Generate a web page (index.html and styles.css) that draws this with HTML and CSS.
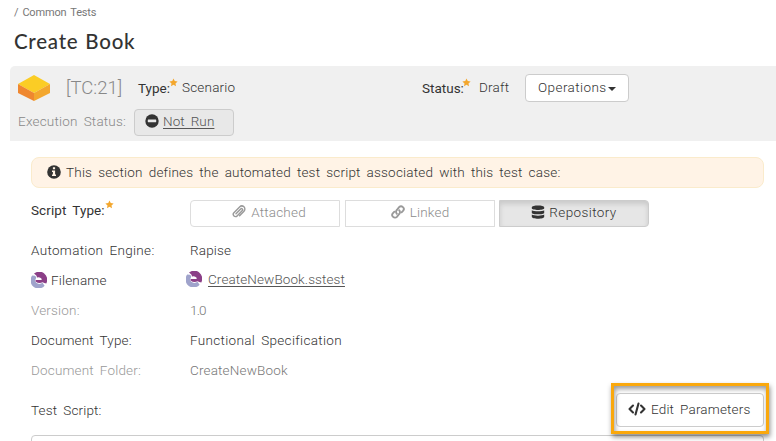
FILE: index.html
```html
<!DOCTYPE html>
<html lang="en">
<head>
<meta charset="utf-8">
<title>Create Book</title>
<link rel="stylesheet" href="styles.css">
</head>
<body>
<svg class="defs" width="0" height="0">
  <symbol id="star" viewBox="0 0 24 24"><path d="M12 1l3.300 7.200 7.700.9-5.700 5.300 1.500 7.800L12 18.300l-6.800 3.900 1.500-7.800L1 9.100l7.700-.9z"/></symbol>
  <symbol id="rapise" viewBox="0 0 16 16">
    <path d="M1.200 3.600A8 8 0 0 0 13.600 13.700L11.500 10.800A4.800 4.800 0 0 1 4 9L5.300 5.200 4 3.800z" fill="#9fa3cb"/>
    <path d="M3 1.600A8 8 0 0 1 15.300 11.400L13.300 11 11.600 10.200Q8 12 4.500 9.400L4.600 7.900 10.600 8V6.800Q9 4.500 6.200 5.400L5.300 3.600z" fill="#8b3f87"/>
  </symbol>
</svg>
<nav class="crumbs"><span>/</span><span>Common Tests</span></nav>
<h1>Create Book</h1>
<header class="summary">
  <div class="line main-line">
    <svg class="box" viewBox="0 0 32 26"><path d="M16 0l16 9-16 9L0 9z" fill="#fbcd25"/><path d="M0 9l16 9v8L0 18z" fill="#ef8730"/><path d="M32 9l-16 9v8l16-8z" fill="#f3a72e"/></svg>
    <span class="token">[TC:21]</span>
    <span class="label type">Type:</span><svg class="star"><use href="#star"/></svg>
    <span class="scenario">Scenario</span>
    <span class="label status">Status:</span><svg class="star"><use href="#star"/></svg>
    <span class="draft">Draft</span>
    <button class="operations"><span>Operations</span><i class="caret"></i></button>
  </div>
  <div class="line exec-line">
    <span class="exec">Execution Status:</span>
    <div class="run"><svg viewBox="0 0 14 14"><circle cx="7" cy="7" r="6.700" fill="#333"/><rect x="2.800" y="5.600" width="8.400" height="2.600" rx=".4" fill="#e8e8e8"/></svg><a>Not Run</a></div>
  </div>
</header>
<main>
  <div class="info"><svg viewBox="0 0 14 14"><circle cx="7" cy="7" r="6.800" fill="#333"/><path d="M5.900 2.300h2.200v2H5.900zM5 5.500h3.100v4.100H9v1.500H5V9.600h.9V7H5z" fill="#fff3e6"/></svg><span>This section defines the automated test script associated with this test case:</span></div>
  <div class="row script-row">
    <div class="name label"><span>Script Type:</span><svg class="star"><use href="#star"/></svg></div>
    <div class="group">
      <button class="off first"><svg viewBox="0 0 14 14"><path d="M4 8.800l4.700-4.900a1.100 1.100 0 0 1 1.600 1.600l-5.200 5.400a2.200 2.200 0 0 1-3.200-3.100l5.700-5.900a3.050 3.050 0 0 1 4.400 4.300L7.600 10.700" fill="none" stroke="currentColor" stroke-width="1.400" stroke-linecap="round"/></svg><span>Attached</span></button>
      <button class="off"><svg viewBox="0 0 14 14"><g fill="none" stroke="currentColor" stroke-width="1.900" stroke-linecap="round"><path d="M5.800 8.700a2.600 2.600 0 0 1 0-3.700l2.300-2.800a2.600 2.600 0 0 1 3.900 3.700l-1.400 1.400"/><path d="M8.200 5.300a2.600 2.600 0 0 1 0 3.700l-2.300 2.800A2.600 2.600 0 0 1 2 8.100l1.400-1.400"/></g></svg><span>Linked</span></button>
      <button class="on"><svg viewBox="0 0 14 14"><g fill="#333"><path d="M.8 2.300C.8-.2 13.200-.2 13.200 2.300v1c0 2.200-12.400 2.200-12.400 0z"/><path d="M.8 5.200c2 1.500 10.400 1.500 12.400 0v2.500c0 2.200-12.400 2.200-12.400 0z"/><path d="M.8 9.600c2 1.500 10.400 1.500 12.400 0v2.200c0 2.600-12.400 2.600-12.400 0z"/></g></svg><span class="repo">Repository</span></button>
    </div>
  </div>
  <div class="row"><div class="name"><span class="wide">Automation Engine:</span></div><div><span>Rapise</span></div></div>
  <div class="row"><div class="name"><svg class="rap"><use href="#rapise"/></svg><span>Filename</span></div><div class="file"><svg class="rap"><use href="#rapise"/></svg><a>CreateNewBook.sstest</a></div></div>
  <div class="row"><div class="name faint"><span>Version:</span></div><div class="muted"><span class="number">1.0</span></div></div>
  <div class="row"><div class="name"><span>Document Type:</span></div><div><span class="wide">Functional Specification</span></div></div>
  <div class="row"><div class="name faint"><span>Document Folder:</span></div><div class="muted"><span>CreateNewBook</span></div></div>
  <div class="test-row">
    <span class="test-label">Test Script:</span>
    <div class="edit-wrap"><button class="edit"><svg viewBox="0 0 18 14"><path d="M5 3.500L1.500 7 5 10.500M13 3.500L16.500 7 13 10.500M10.500 1.500l-3 11" fill="none" stroke="#333" stroke-width="2.100" stroke-linecap="round" stroke-linejoin="round"/></svg><span>Edit Parameters</span></button><div class="highlight"></div></div>
  </div>
  <div class="editor"></div>
</main>
</body>
</html>
```

FILE: styles.css
```css
* { box-sizing: border-box; }
body { margin: 0; width: 776px; height: 441px; overflow: hidden; background: #fff; color: #333; font: 300 13.500px/20px Roboto, sans-serif; letter-spacing: .17px; word-spacing: 2.500px; }
.defs { position: absolute; }
svg { display: block; flex: none; }
span, a { white-space: nowrap; }
button { font: inherit; letter-spacing: inherit; word-spacing: inherit; color: inherit; background: #fff; padding: 0; display: flex; align-items: center; }
a { color: #555; text-decoration: underline; text-underline-offset: 2px; letter-spacing: .1px; }
.crumbs { height: 24px; padding: 3px 0 0 14px; display: flex; gap: 4px; }
.crumbs span { font-size: 11px; font-weight: 400; color: #777; letter-spacing: -.17px; word-spacing: 1.500px; }
h1 { margin: 0; padding-left: 14px; height: 42px; font: 500 20.500px/34px Lato, sans-serif; letter-spacing: .75px; word-spacing: 1px; color: #333; }
.summary { margin-left: 10px; height: 75px; padding: 6px 0 0 8px; background: #f0f0f0; border-radius: 5px 0 0 0; }
.line { display: flex; align-items: center; }
.main-line { height: 32px; }
.box { width: 32px; height: 26px; }
.token { width: 72px; margin-left: 16px; font-size: 18.500px; letter-spacing: 0; color: #888; }
.label { font-weight: 400; color: #333; }
.type { width: 31px; letter-spacing: 0; }
.star { width: 9px; height: 9px; fill: #f3a72e; margin-top: -11px; }
.scenario { width: 240px; margin: -3px 0 0 4px; letter-spacing: .2px; }
.status { width: 40px; letter-spacing: 0; }
.draft { width: 46px; margin: -2px 0 0 8px; letter-spacing: .2px; }
.operations { width: 104px; height: 28px; padding: 0 0 2px 12px; border: 1px solid #ccc; border-radius: 4px; }
.operations span { letter-spacing: .43px; }
.caret { border: 4px solid transparent; border-top-color: #333; border-bottom: 0; margin: 3px 0 0 1px; }
.exec-line { height: 36px; }
.exec { width: 116px; color: #888; margin-top: -2px; letter-spacing: .2px; }
.run { display: flex; align-items: center; gap: 4px; width: 100px; height: 27px; padding: 0 0 2px 10px; background: #e8e8e8; border: 1px solid #ccc; border-radius: 4px; }
.run svg, .info svg { width: 14px; height: 14px; }
main { padding: 16px 12px 0 31px; }
.info { height: 31px; display: flex; align-items: center; gap: 5px; padding: 0 0 1px 15px; border: 1px solid #faebcc; border-radius: 8px; background: #fff3e6; }
.info span { letter-spacing: .2px; }
.row { height: 30px; display: grid; grid-template-columns: 159px 1fr; align-items: center; }
.name { display: flex; align-items: center; }
.script-row { height: 47px; padding-top: 3px; }
.script-row .name { padding-bottom: 7px; letter-spacing: .1px; }
.group { display: flex; gap: 5px; }
.group button { width: 150px; height: 27px; padding-bottom: 2px; justify-content: center; gap: 4px; border: 1px solid #ddd; }
.group svg { width: 14px; height: 14px; }
.group .off { color: #999; gap: 5px; }
.group .off span { color: #8c8c8c; letter-spacing: .2px; }
.group .first { padding-left: 8px; border-radius: 4px 0 0 4px; }
.group .on { margin-left: -1px; background: #e6e6e6; border-color: #ccc; border-radius: 0 4px 4px 0; box-shadow: inset 0 3px 5px rgba(0,0,0,.125); }
.repo { letter-spacing: .4px; }
.wide { letter-spacing: .32px; }
.number { letter-spacing: -.8px; }
.rap { width: 16px; height: 16px; margin-right: 4px; }
.file { display: flex; align-items: center; margin: -3px 0 0 -4px; }
.file .rap { margin-right: 6px; }
.faint { color: #999; }
.muted { color: #777; }
.test-row { height: 50px; display: flex; justify-content: space-between; align-items: center; }
.test-label { margin-top: -1px; }
.edit-wrap { position: relative; }
.edit { width: 148px; height: 34px; padding: 0 0 2px 11px; gap: 5px; border: 1px solid #ccc; border-radius: 4px; }
.edit svg { width: 18px; height: 14px; }
.highlight { position: absolute; left: -5px; top: -10px; width: 158px; height: 51px; border: 3px solid #faa80c; box-shadow: 1px 3px 5px rgba(0,0,0,.45), inset 1px 3px 5px rgba(0,0,0,.4); }
.editor { height: 20px; border: 1px solid #ccc; border-radius: 4px; }
```
